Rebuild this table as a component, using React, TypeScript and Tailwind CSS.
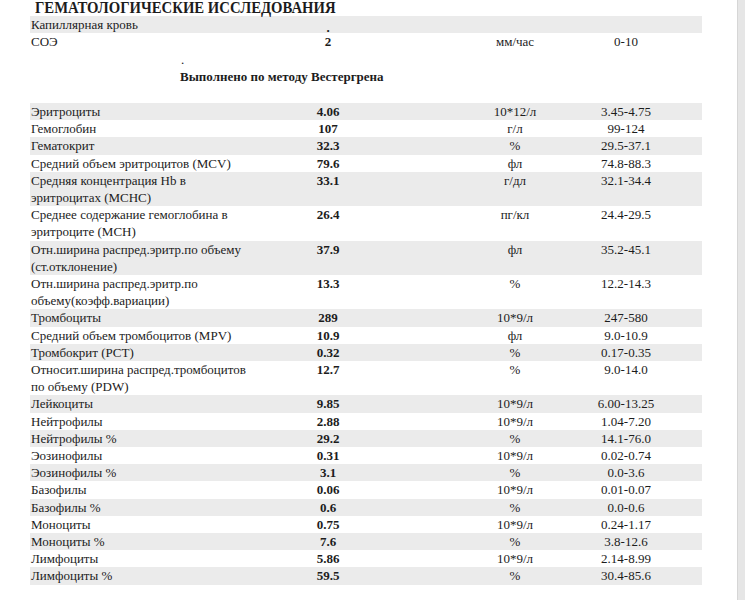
import React from 'react';

type Row = { name: string[]; value: string; unit: string; range: string };

const rows: Row[] = [
  { name: ['Эритроциты'], value: '4.06', unit: '10*12/л', range: '3.45-4.75' },
  { name: ['Гемоглобин'], value: '107', unit: 'г/л', range: '99-124' },
  { name: ['Гематокрит'], value: '32.3', unit: '%', range: '29.5-37.1' },
  { name: ['Средний объем эритроцитов (MCV)'], value: '79.6', unit: 'фл', range: '74.8-88.3' },
  { name: ['Средняя концентрация Hb в', 'эритроцитах (MCHC)'], value: '33.1', unit: 'г/дл', range: '32.1-34.4' },
  { name: ['Среднее содержание гемоглобина в', 'эритроците (MCH)'], value: '26.4', unit: 'пг/кл', range: '24.4-29.5' },
  { name: ['Отн.ширина распред.эритр.по объему', '(ст.отклонение)'], value: '37.9', unit: 'фл', range: '35.2-45.1' },
  { name: ['Отн.ширина распред.эритр.по', 'объему(коэфф.вариации)'], value: '13.3', unit: '%', range: '12.2-14.3' },
  { name: ['Тромбоциты'], value: '289', unit: '10*9/л', range: '247-580' },
  { name: ['Средний объем тромбоцитов (MPV)'], value: '10.9', unit: 'фл', range: '9.0-10.9' },
  { name: ['Тромбокрит (PCT)'], value: '0.32', unit: '%', range: '0.17-0.35' },
  { name: ['Относит.ширина распред.тромбоцитов', 'по объему (PDW)'], value: '12.7', unit: '%', range: '9.0-14.0' },
  { name: ['Лейкоциты'], value: '9.85', unit: '10*9/л', range: '6.00-13.25' },
  { name: ['Нейтрофилы'], value: '2.88', unit: '10*9/л', range: '1.04-7.20' },
  { name: ['Нейтрофилы %'], value: '29.2', unit: '%', range: '14.1-76.0' },
  { name: ['Эозинофилы'], value: '0.31', unit: '10*9/л', range: '0.02-0.74' },
  { name: ['Эозинофилы %'], value: '3.1', unit: '%', range: '0.0-3.6' },
  { name: ['Базофилы'], value: '0.06', unit: '10*9/л', range: '0.01-0.07' },
  { name: ['Базофилы %'], value: '0.6', unit: '%', range: '0.0-0.6' },
  { name: ['Моноциты'], value: '0.75', unit: '10*9/л', range: '0.24-1.17' },
  { name: ['Моноциты %'], value: '7.6', unit: '%', range: '3.8-12.6' },
  { name: ['Лимфоциты'], value: '5.86', unit: '10*9/л', range: '2.14-8.99' },
  { name: ['Лимфоциты %'], value: '59.5', unit: '%', range: '30.4-85.6' },
];

function TableRow({ row, gray }: { row: Row; gray: boolean }) {
  return (
    <div className={`grid grid-cols-[258px_80px_87px_120px_102px_25px] leading-[17.2px] ${gray ? 'bg-[#ebebeb]' : ''}`}>
      <div className="pl-px">
        {row.name.map((line) => (
          <div key={line}>{line}</div>
        ))}
      </div>
      <div className="text-center font-bold">{row.value}</div>
      <div />
      <div className="text-center">{row.unit}</div>
      <div className="text-center">{row.range}</div>
      <div />
    </div>
  );
}

export default function App() {
  return (
    <div className="flex h-[600px] w-[745px] overflow-hidden bg-white text-[13px] text-[#1c1c1c] font-['Liberation_Serif',serif]">
      <div className="flex-1 pl-[30px]">
        <div className="w-[672px]">
          <div className="h-[16px] pl-[5px] text-[16px] font-bold leading-[16px]">
            <span className="inline-block origin-left scale-x-[0.92] whitespace-nowrap">ГЕМАТОЛОГИЧЕСКИЕ ИССЛЕДОВАНИЯ</span>
          </div>
          <div className="grid grid-cols-[258px_80px_87px_120px_102px_25px] bg-[#ebebeb] leading-[17px]">
            <div className="pl-px">Капиллярная кровь</div>
            <div className="translate-y-[3px] text-center font-bold">.</div>
          </div>
          <div className="grid grid-cols-[258px_80px_87px_120px_102px_25px] leading-[18px]">
            <div className="pl-px">СОЭ</div>
            <div className="text-center font-bold">2</div>
            <div />
            <div className="text-center">мм/час</div>
            <div className="text-center">0-10</div>
          </div>
          <div className="pl-[151px] leading-[17px]">.</div>
          <div className="pl-[150px] font-bold leading-[18px]">Выполнено по методу Вестергрена</div>
          <div className="h-[17px]" />
          {rows.map((row, i) => (
            <TableRow key={row.name[0]} row={row} gray={i % 2 === 0} />
          ))}
        </div>
      </div>
      <div className="w-[8px] border-l border-[#d6d6d6] bg-[#e6e6e6]" />
    </div>
  );
}
